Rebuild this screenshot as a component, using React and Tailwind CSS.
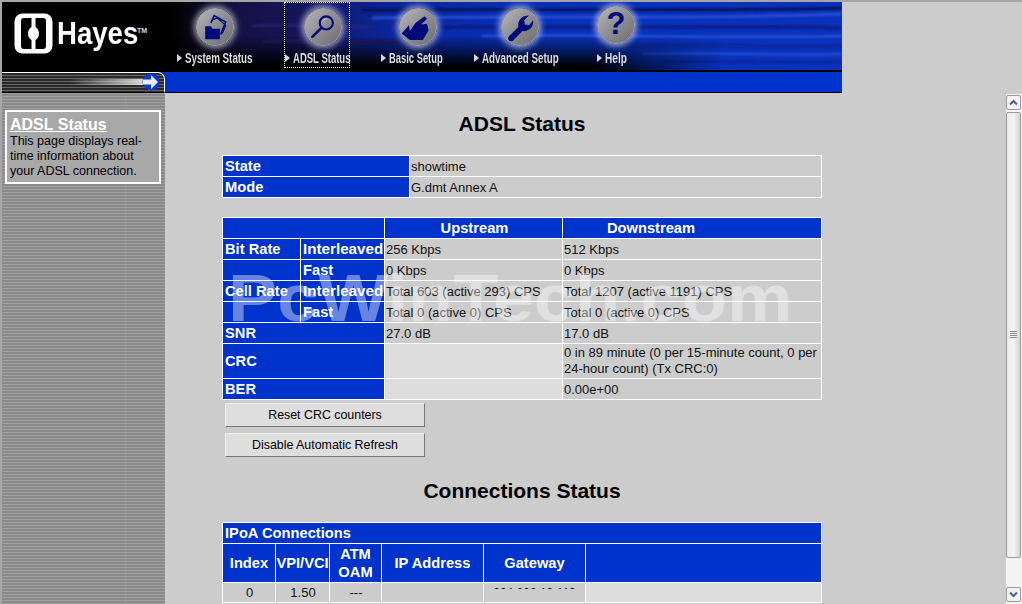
function Glow({ x, y = 6, children }) {
  return (
    <div className="absolute w-[38px] h-[38px] rounded-full" style={{ left: x, top: y }}>
      <div className="w-full h-full rounded-full border border-[#a0a0a6] bg-gradient-to-br from-[#b8b8bc] via-[#8e8e92] to-[#6c6c72] shadow-[0_0_6px_2px_rgba(225,225,240,0.7)] overflow-hidden">
        <svg viewBox="0 0 44 44" className="w-full h-full">{children}</svg>
      </div>
    </div>
  );
}

function NavLabel({ x, scale, children }) {
  return (
    <div className="absolute top-[48px] h-[16px] flex items-center" style={{ left: x }}>
      <svg width="5" height="8" viewBox="0 0 5 8" className="mr-[3px]"><path d="M0 0L5 4L0 8Z" fill="#d8d8d8" /></svg>
      <span className="inline-block origin-left whitespace-nowrap text-[14px] font-bold text-[#dcdcdc]" style={{ transform: `scaleX(${scale})` }}>
        {children}
      </span>
    </div>
  );
}

function Header() {
  return (
    <div className="absolute left-[2px] top-[2px] w-[840px] h-[68px] overflow-hidden bg-black">
      <svg width="840" height="68" className="absolute inset-0">
        <defs>
          <filter id="s"><feGaussianBlur stdDeviation="1.4 0.8" /></filter>
          <linearGradient id="base" x1="0" x2="1" y1="0" y2="0">
            <stop offset="0.2" stopColor="#000" />
            <stop offset="0.27" stopColor="#14103f" />
            <stop offset="0.36" stopColor="#15165c" />
            <stop offset="0.46" stopColor="#0a2599" />
            <stop offset="0.62" stopColor="#0730b8" />
            <stop offset="1" stopColor="#0a32bc" />
          </linearGradient>
          <linearGradient id="down" x1="0" x2="0" y1="0" y2="1">
            <stop offset="0.5" stopColor="#000" stopOpacity="0" />
            <stop offset="0.95" stopColor="#000" stopOpacity="1" />
          </linearGradient>
          <linearGradient id="right" x1="0" x2="1" y1="0" y2="0">
            <stop offset="0.7" stopColor="#fff" />
            <stop offset="0.86" stopColor="#000" />
          </linearGradient>
          <mask id="m"><rect width="840" height="68" fill="url(#right)" /></mask>
        </defs>
        <rect width="840" height="68" fill="url(#base)" />
        <g filter="url(#s)">
          <path d="M360 8C500 6 700 10 840 6" stroke="#04145a" strokeWidth="3" fill="none" />
          <path d="M370 16C540 13 700 18 840 12" stroke="#2a50d4" strokeWidth="2.5" fill="none" />
          <path d="M400 24C560 28 700 22 840 26" stroke="#0a1e80" strokeWidth="3" fill="none" />
          <path d="M480 34C600 32 740 37 840 34" stroke="#2a50d4" strokeWidth="2.5" fill="none" />
          <path d="M620 44C700 42 780 46 840 44" stroke="#0a2596" strokeWidth="3" fill="none" />
          <path d="M640 52C720 50 780 54 840 52" stroke="#2a50d0" strokeWidth="2" fill="none" />
          <path d="M660 60C720 58 780 62 840 60" stroke="#0a2290" strokeWidth="2" fill="none" />
          <path d="M260 40C320 38 360 42 400 40" stroke="#221a60" strokeWidth="3" fill="none" />
          <path d="M250 24C300 22 340 26 370 24" stroke="#2b2476" strokeWidth="2" fill="none" />
        </g>
        <rect width="840" height="68" fill="url(#down)" mask="url(#m)" />
      </svg>

      {/* logo */}
      <svg width="39" height="41" viewBox="0 0 39 41" className="absolute left-[12px] top-[11px]">
        <rect x="0.5" y="0.5" width="38" height="40" rx="8" fill="#fff" />
        <path d="M7 8C7 6 8 5 10 5H17.5V14C15 15.5 14 18 14 20.5C14 23 15 25.5 17.5 27V36H10C8 36 7 35 7 33Z" fill="#000" />
        <path d="M32 8C32 6 31 5 29 5H21.5V14C24 15.5 25 18 25 20.5C25 23 24 25.5 21.5 27V36H29C31 36 32 35 32 33Z" fill="#000" />
      </svg>
      <span className="absolute left-[55px] top-[12px] inline-block origin-left scale-x-[0.89] text-[31px] leading-[40px] font-bold text-white">Hayes</span>
      <span className="absolute left-[135px] top-[25px] inline-block text-[7px] leading-[8px] font-bold text-[#ddd]">TM</span>

      <Glow x="194px">
        <path d="M10 21H17L19 24H28V37H10Z" fill="#000a78" />
        <path d="M17 17L21 8L35 16L29 31" fill="none" stroke="#000a78" strokeWidth="2" />
        <path d="M20 13L25 11L35 20L31 30" fill="none" stroke="#000a78" strokeWidth="1.5" />
      </Glow>
      <Glow x="302px">
        <circle cx="26" cy="17" r="8" fill="none" stroke="#000a78" strokeWidth="2.6" />
        <path d="M20 23L9 34" stroke="#000a78" strokeWidth="3.2" strokeLinecap="round" />
        <path d="M21.5 16C22 13.5 24 12 26.5 12" fill="none" stroke="#c8c8d0" strokeWidth="1.2" />
      </Glow>
      <Glow x="397px">
        <path d="M2 30L11 20L12 27L19 17L30 9L33 12L26 19L33 18L35 26L28 38L12 38Z" fill="#000a78" />
      </Glow>
      <Glow x="499px">
        <path d="M8 34L20 22C19 14 24 8 33 8L27 14L28 19L33 20L38 14C39 22 33 28 25 27L13 39C10 41 6 37 8 34Z" fill="#000a78" />
      </Glow>
      <Glow x="595px" y={4}>
        <text x="22" y="33" textAnchor="middle" fontFamily="Liberation Sans" fontWeight="bold" fontSize="38" fill="#000a78">?</text>
      </Glow>

      <NavLabel x="175px" scale={0.7}>System Status</NavLabel>
      <NavLabel x="283px" scale={0.68}>ADSL Status</NavLabel>
      <NavLabel x="379px" scale={0.67}>Basic Setup</NavLabel>
      <NavLabel x="472px" scale={0.7}>Advanced Setup</NavLabel>
      <NavLabel x="595px" scale={0.72}>Help</NavLabel>
      <div className="absolute left-[282px] top-0 w-[66px] h-[66px] border border-dotted border-white" />
    </div>
  );
}

function Sidebar() {
  return (
    <>
      {/* blue band and arrow tab */}
      <div className="absolute left-[2px] top-[70px] w-[840px] h-[2px] bg-black" />
      <div className="absolute left-[2px] top-[72px] w-[840px] h-[20px] bg-[#0033cc]" />
      <div className="absolute left-[2px] top-[92px] w-[840px] h-px bg-black" />
      <div className="absolute left-[2px] top-[72px] w-[163px] h-[20px] rounded-tr-[7px] border-t border-r border-white bg-[repeating-linear-gradient(180deg,#2a2a2a_0px,#2a2a2a_2px,#666666_2px,#666666_3px)]" />
      <div className="absolute left-[70px] top-[79px] w-[80px] h-[6px] bg-gradient-to-r from-transparent to-[#e8e8e8]" />
      <svg width="18" height="18" viewBox="0 0 18 18" className="absolute left-[142px] top-[73px]">
        <circle cx="9" cy="9" r="8.5" fill="#0b3ad0" />
        <path d="M1 6.5H9V2L16 9L9 16V11.5H1Z" fill="#e8eefc" />
      </svg>

      <div className="absolute left-[2px] top-[93px] w-[163px] h-[511px] bg-[repeating-linear-gradient(180deg,#a0a0a0_0px,#a0a0a0_1px,#8a8a8a_1px,#8a8a8a_3px)]" />
      <div className="absolute left-[125px] top-[93px] w-px h-[511px] bg-white/5" />
      <div className="absolute left-[5px] top-[110px] w-[156px] h-[74px] border-[2px] border-white bg-[#a8a8a8] pl-[3px] pt-[4px] text-[12.5px] leading-[15px] text-black">
        <div className="text-[16px] leading-[17px] font-bold text-white underline mb-[1px]">ADSL Status</div>
        <div>This page displays real-<br />time information about<br />your ADSL connection.</div>
      </div>
    </>
  );
}

const th = "bg-[#0033cc] text-white font-bold border border-white p-0 pl-[2px] text-[14.7px] leading-[16px]";
const td = "bg-[#cccccc] border border-white p-0 pl-[1px] text-[13px] leading-[15px] text-[#111]";
const tdEmpty = "bg-[#dddddd] border border-white p-0";

function AdslTable() {
  return (
    <table className="absolute left-[222px] top-[217px] w-[600px] table-fixed border-collapse">
      <colgroup>
        <col className="w-[78px]" /><col className="w-[84px]" /><col className="w-[178px]" /><col />
      </colgroup>
      <tbody>
        <tr className="h-[21px]">
          <td colSpan={2} className={th}></td>
          <td className={`${th} text-center`}>Upstream</td>
          <td className={`${th} text-center pr-[84px]`}>Downstream</td>
        </tr>
        <tr className="h-[21px]"><td className={th}>Bit Rate</td><td className={`${th} whitespace-nowrap text-[15.2px]`}>Interleaved</td><td className={td}>256 Kbps</td><td className={td}>512 Kbps</td></tr>
        <tr className="h-[21px]"><td className={th}></td><td className={th}>Fast</td><td className={td}>0 Kbps</td><td className={td}>0 Kbps</td></tr>
        <tr className="h-[21px]"><td className={th}>Cell Rate</td><td className={`${th} whitespace-nowrap text-[15.2px]`}>Interleaved</td><td className={td}>Total 603 (active 293) CPS</td><td className={td}>Total 1207 (active 1191) CPS</td></tr>
        <tr className="h-[21px]"><td className={th}></td><td className={th}>Fast</td><td className={td}>Total 0 (active 0) CPS</td><td className={td}>Total 0 (active 0) CPS</td></tr>
        <tr className="h-[21px]"><td colSpan={2} className={th}>SNR</td><td className={td}>27.0 dB</td><td className={td}>17.0 dB</td></tr>
        <tr className="h-[35px]"><td colSpan={2} className={th}>CRC</td><td className={tdEmpty}></td><td className={`${td} leading-[16px]`}>0 in 89 minute (0 per 15-minute count, 0 per 24-hour count) (Tx CRC:0)</td></tr>
        <tr className="h-[21px]"><td colSpan={2} className={th}>BER</td><td className={tdEmpty}></td><td className={td}>0.00e+00</td></tr>
      </tbody>
    </table>
  );
}

function Btn({ top, children }) {
  return (
    <button className="absolute left-[225px] w-[200px] h-[24px] bg-[#dedede] border border-t-[#eeeeee] border-l-[#eeeeee] border-r-[#777777] border-b-[#777777] text-center text-[12.4px] text-black" style={{ top }}>
      {children}
    </button>
  );
}

function Scrollbar() {
  return (
    <div className="absolute left-[1006px] top-[94px] w-[16px] h-[510px] bg-[#f4f4f4]">
      <div className="absolute left-0 top-[1px] w-[15px] h-[15px] rounded-[2px] border border-[#9a9a9a] bg-[#f2f2f2] flex items-center justify-center">
        <svg width="9" height="7" viewBox="0 0 9 7"><path d="M1 5.5L4.5 2L8 5.5" fill="none" stroke="#4d6185" strokeWidth="2" /></svg>
      </div>
      <div className="absolute left-0 top-[18px] w-[15px] h-[446px] rounded-[2px] border border-[#9a9a9a] bg-gradient-to-r from-[#ececec] via-[#f4f4f4] to-[#d4d4d4] flex items-center justify-center">
        <div className="w-[7px] h-[8px] bg-[repeating-linear-gradient(180deg,#8c8c8c_0px,#8c8c8c_1px,#eeeeee_1px,#eeeeee_2px)]" />
      </div>
      <div className="absolute left-0 top-[493px] w-[15px] h-[15px] rounded-[2px] border border-[#9a9a9a] bg-[#f2f2f2] flex items-center justify-center">
        <svg width="9" height="7" viewBox="0 0 9 7"><path d="M1 1.5L4.5 5L8 1.5" fill="none" stroke="#4d6185" strokeWidth="2" /></svg>
      </div>
    </div>
  );
}

export default function App() {
  return (
    <div className="relative w-[1022px] h-[604px] overflow-hidden bg-[#cccccc] [font-family:Liberation_Sans,Arial,sans-serif]">
      <div className="absolute left-0 top-0 w-full h-[2px] bg-[#a6a6a6]" />
      <div className="absolute left-0 top-0 w-[2px] h-full bg-[#a6a6a6]" />
      <Header />
      <Sidebar />

      <h1 className="absolute left-[222px] top-[111px] w-[600px] text-center text-[21px] leading-[26px] font-bold text-black">ADSL Status</h1>

      <table className="absolute left-[222px] top-[155px] w-[600px] table-fixed border-collapse">
        <colgroup><col className="w-[187px]" /><col /></colgroup>
        <tbody>
          <tr className="h-[21px]"><td className={th}>State</td><td className={td}>showtime</td></tr>
          <tr className="h-[21px]"><td className={th}>Mode</td><td className={td}>G.dmt Annex A</td></tr>
        </tbody>
      </table>

      <AdslTable />
      <Btn top="403px">Reset CRC counters</Btn>
      <Btn top="433px">Disable Automatic Refresh</Btn>

      <h2 className="absolute left-[222px] top-[478px] w-[600px] text-center text-[21px] leading-[26px] font-bold text-black">Connections Status</h2>

      <table className="absolute left-[222px] top-[522px] w-[600px] table-fixed border-collapse">
        <colgroup>
          <col className="w-[53px]" /><col className="w-[54px]" /><col className="w-[52px]" /><col className="w-[102px]" /><col className="w-[102px]" /><col />
        </colgroup>
        <tbody>
          <tr className="h-[21px]"><td colSpan={6} className={th}>IPoA Connections</td></tr>
          <tr className="h-[39px]">
            <td className={`${th} text-center !pl-0`}>Index</td>
            <td className={`${th} text-center !pl-0 whitespace-nowrap`}>VPI/VCI</td>
            <td className={`${th} text-center !pl-0 leading-[18px]`}>ATM OAM</td>
            <td className={`${th} text-center !pl-0`}>IP Address</td>
            <td className={`${th} text-center !pl-0`}>Gateway</td>
            <td className={th}></td>
          </tr>
          <tr className="h-[20px]">
            <td className={`${td} text-center`}>0</td>
            <td className={`${td} text-center`}>1.50</td>
            <td className={`${td} text-center`}>---</td>
            <td className={td}></td>
            <td className={`${td} relative`}>
              <div className="absolute left-0 top-[3px] w-full h-[3px] overflow-hidden text-center text-[12px] leading-[14px]">204.200.13.113</div>
            </td>
            <td className={tdEmpty}></td>
          </tr>
        </tbody>
      </table>

      {/* watermark */}
      <div className="absolute left-[228px] top-[260px] origin-left scale-x-[1.12] whitespace-nowrap text-[66px] leading-[76px] font-bold text-white/40 pointer-events-none">PcWinTech.com</div>

      <Scrollbar />
    </div>
  );
}
